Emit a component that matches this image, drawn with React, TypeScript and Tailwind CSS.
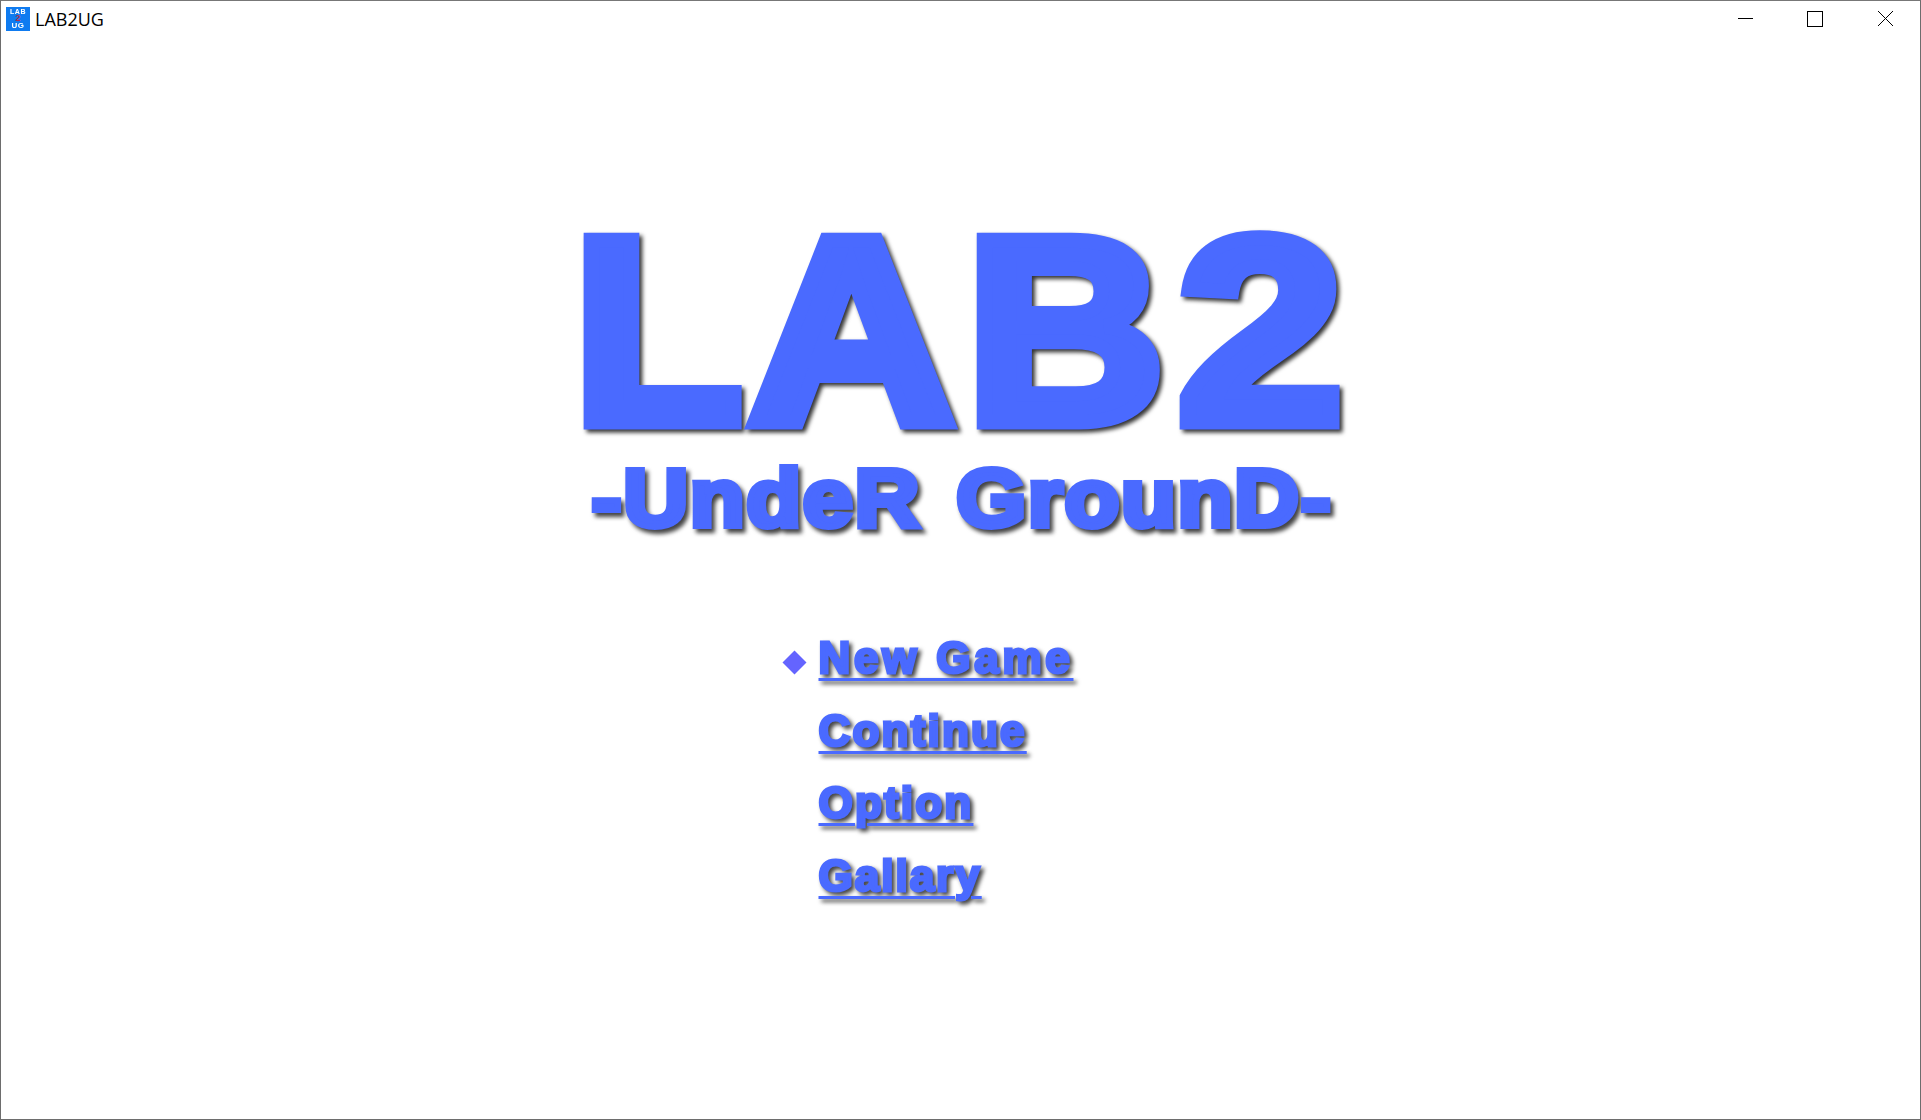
const menu = [
    { label: "New Game", spacing: "tracking-[3.75px]" },
    { label: "Continue", spacing: "tracking-[2.2px]" },
    { label: "Option", spacing: "tracking-[2.2px]" },
    { label: "Gallary", spacing: "tracking-[2px]" },
];

// each logo letter has its own stretch, the logo was not set in one font width
const logo = [
    { ch: "L", box: "w-[159px]", glyph: "scale-x-[1.05] translate-x-[-2px]" },
    { ch: "A", box: "ml-[6px] w-[212px]", glyph: "scale-x-[1.08]" },
    { ch: "B", box: "ml-[15px] w-[187px]", glyph: "scale-x-[1.04]" },
    { ch: "2", box: "ml-[17px] w-[165px]", glyph: "scale-x-[1.125] translate-x-[2px]" },
];

function AppIcon() {
    return (
        <div className="flex h-6 w-6 flex-col items-center justify-center bg-[#0f7bf0] font-['Liberation_Sans',sans-serif] font-bold text-white">
            <span className="text-[7px] leading-[7px] tracking-[0.5px] blur-[0.3px]">LAB</span>
            <span className="text-[9px] leading-[7px] text-[#b03050]">2</span>
            <span className="text-[8px] leading-[8px] tracking-[0.5px] blur-[0.3px]">UG</span>
        </div>
    );
}

function WindowButtons() {
    return (
        <div className="ml-auto mt-[10px] pr-[27px]">
            <svg width="156" height="16" viewBox="0 0 156 16" fill="none" stroke="#000" strokeWidth="1">
                <path d="M1 7.5H16" />
                <rect x="70.5" y="0.5" width="15" height="15" />
                <path d="M141 0L156 15M156 0L141 15" />
            </svg>
        </div>
    );
}

export default function App() {
    return (
        <div className="flex h-screen flex-col overflow-hidden border-x border-b border-t border-x-[#6d6d6d] border-b-[#6d6d6d] border-t-[#777777] bg-white font-['Liberation_Sans',sans-serif]">
            <div className="flex h-[37px] items-start">
                <div className="ml-[5px] mt-[6px]">
                    <AppIcon />
                </div>
                <span className="ml-[5px] mt-[6px] font-['Open_Sans',sans-serif] text-[18px] leading-[24px] text-black">LAB2UG</span>
                <WindowButtons />
            </div>
            <div className="flex flex-1 flex-col items-center">
                <h1 className="mt-[182px] flex font-bold leading-[222px] text-[#4a6aff] text-[264px] [-webkit-text-stroke:15px_#4a6aff] blur-[0.4px] drop-shadow-[3px_3px_2px_#333333]">
                    {logo.map((l) => (
                        <span key={l.ch} className={"flex justify-center " + l.box}>
                            <span className={l.glyph}>{l.ch}</span>
                        </span>
                    ))}
                </h1>
                <h2 className="mt-[14px] origin-center translate-x-[1px] scale-x-[1.096] font-bold leading-[84px] tracking-[1.5px] text-[#4a6aff] text-[82px] [word-spacing:8px] [-webkit-text-stroke:6px_#4a6aff] blur-[0.5px] drop-shadow-[3px_4px_2px_#444444]">
                    -UndeR GrounD-
                </h2>
                <ul className="mt-[95px] flex w-[346px] flex-col gap-[26.7px]">
                    {menu.map((item, i) => (
                        <li key={item.label} className="flex h-[46px] items-center">
                            <span className={i === 0 ? "mr-[14px] h-[17px] w-[17px] translate-x-[-2px] translate-y-[4px] rotate-45 bg-[#6464ff]" : "mr-[14px] h-[17px] w-[17px]"} />
                            <span className={"font-bold leading-[46px] text-[#4a6aff] text-[44px] underline decoration-[3px] underline-offset-[5px] [-webkit-text-stroke:3px_#4a6aff] blur-[0.6px] drop-shadow-[3px_3px_2px_#444444] " + item.spacing}>
                                {item.label}
                            </span>
                        </li>
                    ))}
                </ul>
            </div>
        </div>
    );
}
